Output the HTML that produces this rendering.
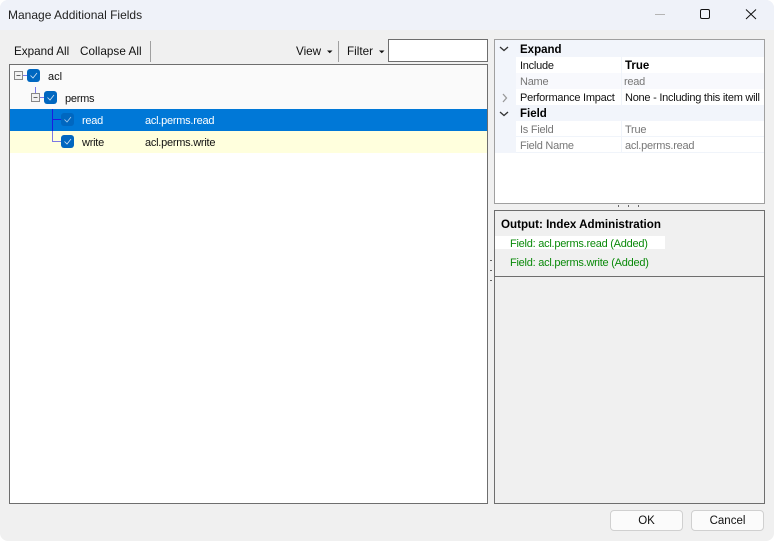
<!DOCTYPE html>
<html><head><meta charset="utf-8"><style>
html,body{margin:0;padding:0;background:#fff}
#w{position:relative;width:774px;height:541px;background:#f0f0f0;overflow:hidden;font:11px "Liberation Sans",sans-serif;color:#111;border-radius:8px}
#w div{position:absolute;white-space:nowrap}
.t{line-height:16px;height:16px;letter-spacing:-.25px;margin-top:1px}
.g{color:#777}
.b{font-weight:bold;color:#000}
</style></head><body><div id="w">
<div style="left:0;top:0;width:774px;height:30px;background:#eff2f9"></div>
<div class="t" style="left:8px;top:6px;font-size:12px;letter-spacing:0;color:#222">Manage Additional Fields</div>
<svg style="position:absolute;left:640px;top:0" width="134" height="30" fill="none"><path d="M15 14.500h10" stroke="#b5b5b5"/><rect x="60.500" y="9.500" width="9" height="9" rx="1.500" stroke="#111"/><path d="M106 9.500l10 9.500M116 9.500l-10 9.500" stroke="#111"/></svg>

<div class="t" style="left:14px;top:43px;font-size:11.700px;letter-spacing:0">Expand All</div>
<div class="t" style="left:80px;top:43px;font-size:11.700px;letter-spacing:.05px">Collapse All</div>
<div style="left:150px;top:41px;width:1px;height:21px;background:#a0a0a0"></div>
<div class="t" style="left:296px;top:43px;font-size:11.700px;letter-spacing:0">View</div>
<svg style="position:absolute;left:326px;top:49px" width="8" height="5"><path d="M1 1.500h5.500L3.750 4.200z" fill="#111"/></svg>
<div style="left:338px;top:41px;width:1px;height:21px;background:#a0a0a0"></div>
<div class="t" style="left:347px;top:43px;font-size:11.700px;letter-spacing:0">Filter</div>
<svg style="position:absolute;left:378px;top:49px" width="8" height="5"><path d="M1 1.500h5.500L3.750 4.200z" fill="#111"/></svg>
<div style="left:388px;top:39px;width:98px;height:21px;background:#fff;border:1px solid #6e6e6e"></div>

<div id="tree" style="left:9px;top:64px;width:477px;height:438px;border:1px solid #6e6e6e;background:#fff;overflow:hidden">
<div style="left:0;top:0;width:478px;height:44px;background:#fafafa"></div>
<div style="left:0;top:44px;width:478px;height:22px;background:#0078d7"></div>
<div style="left:0;top:66px;width:478px;height:22px;background:#ffd;"></div>
<svg style="position:absolute;left:0;top:0" width="80" height="90" fill="none">
<path d="M4.500 6.500h8v8h-8z" stroke="#888" fill="#f2f2f2"/><path d="M6.500 10.500h4" stroke="#666"/>
<path d="M13 10.500h4" stroke="#7b78e6"/>
<path d="M25.500 22v7" stroke="#7b78e6"/>
<path d="M21.500 28.500h8v8h-8z" stroke="#888" fill="#f2f2f2"/><path d="M23.500 32.500h4" stroke="#666"/>
<path d="M30 32.500h4" stroke="#7b78e6"/>
<path d="M42.500 44v22M43 54.500h8" stroke="#1b1be0"/>
<path d="M42.500 66v11M43 76.500h8" stroke="#7b78e6"/>
<rect x="17" y="4" width="13" height="13" rx="3" fill="#0067c0"/><path d="M20.500 10.500l2.500 2.500 4-5" stroke="#d5e6f6" stroke-width=".8"/>
<rect x="34" y="26" width="13" height="13" rx="3" fill="#0067c0"/><path d="M37.500 32.500l2.500 2.500 4-5" stroke="#d5e6f6" stroke-width=".8"/>
<rect x="51" y="48" width="13" height="13" rx="3" fill="#0067c0"/><path d="M54.500 54.500l2.500 2.500 4-5" stroke="#a9cdee" stroke-width=".8"/>
<rect x="51" y="70" width="13" height="13" rx="3" fill="#0067c0"/><path d="M54.500 76.500l2.500 2.500 4-5" stroke="#d5e6f6" stroke-width=".8"/>
</svg>
<div class="t" style="left:38px;top:3px;letter-spacing:0">acl</div>
<div class="t" style="left:55px;top:25px">perms</div>
<div class="t" style="left:72px;top:47px;color:#fff">read</div>
<div class="t" style="left:135px;top:47px;color:#fff">acl.perms.read</div>
<div class="t" style="left:72px;top:69px">write</div>
<div class="t" style="left:135px;top:69px">acl.perms.write</div>
</div>

<div style="left:494px;top:39px;width:269px;height:163px;border:1px solid #a0a0a0;background:#fff;overflow:hidden">
<div style="left:0;top:0;width:269px;height:113px;background:#f2f5fb"></div>
<div style="left:21px;top:17px;width:248px;height:16px;background:#fff"></div>
<div style="left:21px;top:33px;width:248px;height:16px;background:#f8f9fd"></div>
<div style="left:21px;top:49px;width:248px;height:16px;background:#fff"></div>
<div style="left:21px;top:81px;width:248px;height:32px;background:#fff"></div>
<div style="left:21px;top:96px;width:248px;height:1px;background:#f0f4fa"></div>
<div style="left:21px;top:112px;width:248px;height:1px;background:#f0f4fa"></div>
<div style="left:126px;top:17px;width:1px;height:48px;background:#f0f4fa"></div>
<div style="left:126px;top:81px;width:1px;height:32px;background:#f0f4fa"></div>
<svg style="position:absolute;left:0;top:0" width="20" height="100" fill="none" stroke="#333" stroke-width="1.300"><path d="M5 7l4 3.500 4-3.500M5 72l4 3.500 4-3.500"/><path d="M8 54l3.500 4-3.500 4" stroke="#999"/></svg>
<div class="t b" style="left:25px;top:1px;font-size:11.500px;letter-spacing:0">Expand</div>
<div class="t" style="left:25px;top:17px">Include</div><div class="t b" style="left:130px;top:17px;font-size:11.500px;letter-spacing:0">True</div>
<div class="t g" style="left:25px;top:33px">Name</div><div class="t g" style="left:129px;top:33px">read</div>
<div class="t" style="left:25px;top:49px">Performance Impact</div><div class="t" style="left:130px;top:49px">None - Including this item will</div>
<div class="t b" style="left:25px;top:65px;font-size:11.500px;letter-spacing:0">Field</div>
<div class="t g" style="left:25px;top:81px">Is Field</div><div class="t g" style="left:130px;top:81px">True</div>
<div class="t g" style="left:25px;top:97px">Field Name</div><div class="t g" style="left:130px;top:97px">acl.perms.read</div>
</div>

<svg style="position:absolute;left:489px;top:203px" width="160" height="85" fill="#666"><rect x="129" y="2" width="1" height="2"/><rect x="139" y="2" width="1" height="2"/><rect x="149" y="2" width="1" height="2"/><rect x="1" y="57" width="2" height="1"/><rect x="1" y="67" width="2" height="1"/><rect x="1" y="77" width="2" height="1"/></svg>

<div style="left:494px;top:210px;width:269px;height:292px;border:1px solid #6e6e6e;background:#f0f0f0;overflow:hidden">
<div style="left:0;top:65px;width:269px;height:1px;background:#6e6e6e"></div>
<div class="t b" style="left:6px;top:5px;font-size:11.600px;letter-spacing:0">Output: Index Administration</div>
<div style="left:0;top:25px;width:170px;height:13px;background:#fff"></div>
<div class="t" style="left:15px;top:24px;color:#0a8a0a">Field: acl.perms.read (Added)</div>
<div class="t" style="left:15px;top:43px;color:#0a8a0a">Field: acl.perms.write (Added)</div>
</div>

<div class="t" style="left:610px;top:510px;width:71px;height:19px;margin:0;line-height:20px;text-align:center;background:#fbfbfb;border:1px solid #d0d0d0;border-radius:4px;font-size:11.500px;letter-spacing:0">OK</div>
<div class="t" style="left:691px;top:510px;width:71px;height:19px;margin:0;line-height:20px;text-align:center;background:#fbfbfb;border:1px solid #d0d0d0;border-radius:4px;font-size:11.500px;letter-spacing:0">Cancel</div>
</div></body></html>
